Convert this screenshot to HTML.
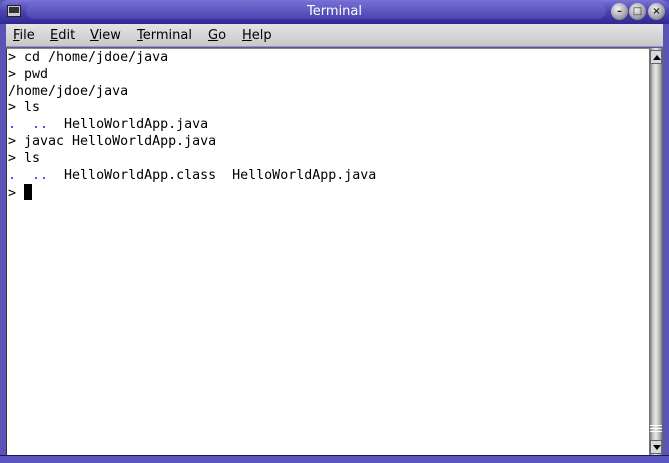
<!DOCTYPE html>
<html><head><style>
*{margin:0;padding:0;box-sizing:border-box}
body{width:669px;height:463px;overflow:hidden;background:#5a54b4;position:relative;font-family:"DejaVu Sans","Liberation Sans",sans-serif}
.title{position:absolute;left:0;top:0;width:669px;height:24px;background:linear-gradient(#7a74d8,#4c45b0 45%,#2e2890);border-radius:8px 8px 0 0}
.title .bar{position:absolute;left:26px;top:3px;width:580px;height:16px;border-radius:8px;background:linear-gradient(#706ad0,#4a43b0)}
.title span{position:absolute;left:0;width:669px;top:4px;text-align:center;color:#fff;font-size:13px}
.ico{position:absolute;left:7px;top:5px;width:14px;height:12px;background:#ccc;border:1px solid #222}
.ico:after{content:"";position:absolute;left:1px;top:1px;width:10px;height:6px;background:#333}
.btn{position:absolute;top:3px;width:17px;height:17px;border-radius:50%;background:radial-gradient(circle at 40% 35%,#f4f4f4,#a0a0a8 60%,#555);font-size:10px;line-height:17px;text-align:center;color:#222;font-weight:bold}
.menu{position:absolute;left:6px;top:24px;width:657px;height:23px;background:linear-gradient(#e4e4e4,#c8c8c8);border-bottom:1px solid #999}
.menu span{position:absolute;top:4px;font-size:13px;color:#000}
.menu u{text-decoration:underline}
.term{position:absolute;left:6px;top:48px;width:643px;height:408px;background:#fff;border-left:1px solid #333;border-top:1px solid #888}
pre{position:absolute;left:1px;top:1px;font-family:"DejaVu Sans Mono","Liberation Mono",monospace;font-size:13.3px;line-height:16.8px;color:#000}
.b{color:#3030e0}
.cur{display:inline-block;width:8px;height:16px;background:#000;vertical-align:-3px}
.sb{position:absolute;left:649px;top:48px;width:14px;height:408px;background:linear-gradient(90deg,#666,#ccc 30%,#e8e8e8 50%,#aaa 80%,#555)}
.sb .up,.sb .dn{position:absolute;left:1px;width:12px;height:14px;background:#d8d8e0;border:1px solid #666}
.sb .up{top:2px}.sb .dn{bottom:2px}
.sb .up:after{content:"";position:absolute;left:2px;top:4px;border-left:4px solid transparent;border-right:4px solid transparent;border-bottom:5px solid #000}
.sb .dn:after{content:"";position:absolute;left:2px;top:4px;border-left:4px solid transparent;border-right:4px solid transparent;border-top:5px solid #000}
.grip{position:absolute;left:1px;width:12px;height:1px;background:#fff}
.bot{position:absolute;left:0;top:455px;width:669px;height:8px;background:#5a54c0;border-top:1px solid #1a1660}
</style></head><body>
<div class="title"><div class="bar"></div><span>Terminal</span><div class="ico"></div>
<div class="btn" style="left:611px">–</div><div class="btn" style="left:629px">□</div><div class="btn" style="left:648px">×</div></div>
<div class="menu">
<span style="left:7px"><u>F</u>ile</span>
<span style="left:44px"><u>E</u>dit</span>
<span style="left:84px"><u>V</u>iew</span>
<span style="left:131px"><u>T</u>erminal</span>
<span style="left:202px"><u>G</u>o</span>
<span style="left:236px"><u>H</u>elp</span>
</div>
<div class="term"><pre>&gt; cd /home/jdoe/java
&gt; pwd
/home/jdoe/java
&gt; ls
<span class="b">.  ..</span>  HelloWorldApp.java
&gt; javac HelloWorldApp.java
&gt; ls
<span class="b">.  ..</span>  HelloWorldApp.class  HelloWorldApp.java
&gt; <span class="cur"></span></pre></div>
<div class="sb"><div class="up"></div><div class="grip" style="top:377px"></div><div class="grip" style="top:380px"></div><div class="grip" style="top:383px"></div><div class="dn"></div></div>
<div class="bot"></div>
</body></html>
